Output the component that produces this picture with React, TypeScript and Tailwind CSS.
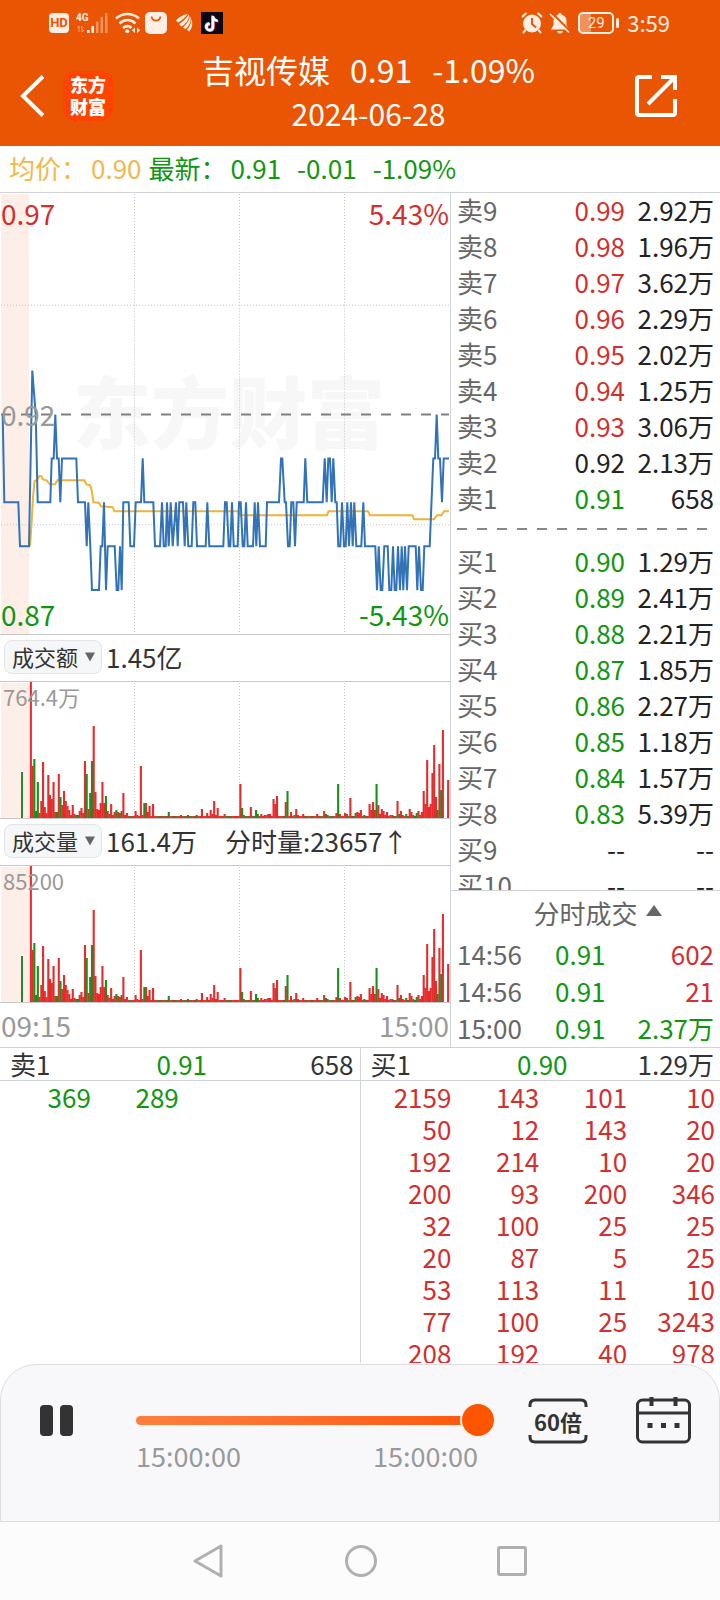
import { ReactNode } from 'react';

const GREEN = 'text-[#119611]';
const RED = 'text-[#d32f2f]';
const BLACK = 'text-[#222]';

type Row = [label: string, price: string, volume: string, color: string];

const sellRows: Row[] = [
  ['卖9', '0.99', '2.92万', RED],
  ['卖8', '0.98', '1.96万', RED],
  ['卖7', '0.97', '3.62万', RED],
  ['卖6', '0.96', '2.29万', RED],
  ['卖5', '0.95', '2.02万', RED],
  ['卖4', '0.94', '1.25万', RED],
  ['卖3', '0.93', '3.06万', RED],
  ['卖2', '0.92', '2.13万', BLACK],
  ['卖1', '0.91', '658', GREEN],
];

const buyRows: Row[] = [
  ['买1', '0.90', '1.29万', GREEN],
  ['买2', '0.89', '2.41万', GREEN],
  ['买3', '0.88', '2.21万', GREEN],
  ['买4', '0.87', '1.85万', GREEN],
  ['买5', '0.86', '2.27万', GREEN],
  ['买6', '0.85', '1.18万', GREEN],
  ['买7', '0.84', '1.57万', GREEN],
  ['买8', '0.83', '5.39万', GREEN],
  ['买9', '--', '--', BLACK],
  ['买10', '--', '--', BLACK],
];

const trades: Row[] = [
  ['14:56', '0.91', '602', RED],
  ['14:56', '0.91', '21', RED],
  ['15:00', '0.91', '2.37万', GREEN],
];

const buyQueue = [
  [2159, 143, 101, 10],
  [50, 12, 143, 20],
  [192, 214, 10, 20],
  [200, 93, 200, 346],
  [32, 100, 25, 25],
  [20, 87, 5, 25],
  [53, 113, 11, 10],
  [77, 100, 25, 3243],
  [208, 192, 40, 978],
];

// [x in thirds of a pixel, price in cents]
const prices = [
  [8, 92], [13, 90], [55, 90], [60, 89], [87, 89], [97, 93], [107, 92], [113, 90], [151, 90], [155, 91],
  [161, 91], [166, 92], [171, 91], [176, 91], [181, 90], [186, 91], [229, 91], [234, 90], [255, 90], [260, 89],
  [265, 90], [271, 89], [276, 88], [297, 88], [302, 89], [307, 89], [312, 90], [318, 88], [323, 89], [344, 89],
  [350, 88], [355, 88], [360, 89], [365, 88], [370, 90], [386, 90], [391, 89], [402, 89], [407, 90], [423, 90],
  [428, 91], [433, 90], [460, 90], [465, 89], [480, 89], [486, 90], [491, 89], [497, 89], [501, 90], [506, 89],
  [512, 90], [518, 89], [528, 90], [533, 89], [538, 90], [549, 90], [554, 89], [559, 90], [565, 89], [575, 89],
  [580, 90], [586, 90], [591, 89], [617, 89], [622, 90], [628, 89], [670, 89], [675, 90], [680, 90], [686, 89],
  [691, 89], [696, 90], [701, 89], [713, 89], [717, 90], [722, 90], [728, 89], [733, 89], [738, 90], [743, 89],
  [759, 89], [764, 90], [769, 89], [774, 90], [780, 89], [797, 89], [801, 90], [837, 90], [843, 91], [847, 91],
  [854, 90], [858, 90], [864, 89], [869, 89], [874, 90], [880, 90], [885, 89], [890, 90], [911, 90], [916, 91],
  [922, 90], [968, 90], [974, 91], [980, 90], [985, 91], [990, 91], [995, 90], [1000, 91], [1006, 90], [1010, 90],
  [1015, 89], [1021, 89], [1026, 90], [1032, 89], [1037, 89], [1042, 90], [1047, 89], [1053, 90], [1058, 89], [1063, 90],
  [1069, 89], [1084, 89], [1090, 90], [1095, 89], [1126, 89], [1131, 88], [1136, 89], [1142, 88], [1147, 88], [1153, 89],
  [1163, 89], [1168, 88], [1174, 88], [1179, 89], [1184, 88], [1189, 88], [1194, 89], [1200, 88], [1205, 89], [1210, 88],
  [1215, 89], [1221, 88], [1226, 89], [1247, 89], [1252, 88], [1257, 89], [1263, 88], [1268, 88], [1273, 89], [1289, 89],
  [1300, 91], [1305, 91], [1310, 92], [1315, 91], [1320, 91], [1326, 90], [1331, 91], [1347, 91],
];

const pricePoints = prices.map(([x, p]) => `${(x / 3).toFixed(1)},${222 + (92 - p) * 44}`).join(' ');

const averagePoints =
  '30,354 31.5,332 33,305 34.5,289 37.5,287 39.5,283.5 41.5,284 43,287 46.5,288 50,292 55,292 57.5,288 84.5,288 ' +
  '86.5,292 90,293 91.5,297 93.5,310 99,310.5 101,314 112.5,315 114.5,319 238,319 240,323 327,323 328.5,319 ' +
  '368,319 370,323 412.5,323 414,327 434,327 437,323 441.5,323 444,319 449,319';

// One bar a minute, negative where the price fell
const volumes = [
  136, 52, -59, -7, -36, 5, 17, 56, 11, 5, 43, 23, 19, 36, 6, -6, 44, -21, 13, 27,
  17, 12, 8, 3, 13, 4, -3, -3, 7, 10, 5, 57, -44, 9, -25, -57, 92, 26, 9, 8,
  15, 36, 15, -22, 7, 4, 14, 3, 6, -8, 6, 5, -7, 25, 3, 5, 2, -2, 2, 2,
  7, 3, 2, 52, 3, -15, 15, 6, 12, 2, 14, 2, 2, -2, 2, 2, -2, 2, 2, -6,
  2, 2, -2, 2, -2, 2, 3, 2, -2, 2, -3, 2, -2, 2, 2, -3, 2, 2, 9, 2,
  2, 5, 2, 8, 4, 17, 3, 10, 2, 2, 2, 4, -2, 2, -2, 2, 2, 2, 2, 2,
  34, -10, 3, -2, 2, -2, 11, 2, -2, -8, -4, 2, 4, 2, 3, 3, 4, 4, 2, 19,
  14, 22, 2, 2, 2, -2, 16, -27, 2, 6, 2, -3, 9, 3, 2, 2, 4, 2, -2, 2,
  2, -2, 2, 2, 4, 2, -2, 2, 7, -4, 3, -2, 2, -2, 2, 5, -34, 4, 2, 2,
  5, 4, -2, 20, 2, -2, -5, 6, 5, 8, 2, -3, 2, 2, 14, 8, 16, 8, -34, 13,
  4, 9, 7, 3, 6, 2, 3, 3, -2, 2, 17, -4, 7, 3, 2, -4, 2, 9, 6, 3,
  -2, -5, 7, 3, 6, 27, 14, 58, 11, 14, 45, 73, 21, -8, 54, -28, 88, 0, 0, 38,
];

function Grid({ height }: { height: number }) {
  return (
    <>
      <rect x="1" y="1" width="28" height={height - 1} fill="#fdeee8" />
      <path
        d={`M134.5 1V${height}M239.5 1V${height}M344.5 1V${height}`}
        stroke="#c4c4c4"
        strokeDasharray="1 2"
      />
    </>
  );
}

function VolumeChart({ label }: { label: string }) {
  return (
    <div className="relative border-y border-[#c8c8c8]">
      <svg viewBox="0 0 450 136" preserveAspectRatio="none" className="block h-[136px] w-full">
        <Grid height={136} />
        <rect x="21" y="90" width="2" height="46" fill="#2c862c" />
        {volumes.map((v, i) => (
          <rect
            key={i}
            x={29.8 + i * 1.746}
            y={136 - Math.abs(v)}
            width="2.1"
            height={Math.abs(v)}
            fill={v < 0 ? '#1a8f1a' : '#e52b2b'}
          />
        ))}
      </svg>
      <span className="absolute left-[3px] top-0 text-[22px] leading-7 text-[#999]">{label}</span>
    </div>
  );
}

function MetricSelect({ name, children }: { name: string; children: ReactNode }) {
  return (
    <div className="flex h-[46px] items-center pb-0.5 pl-1 text-[#333]">
      <div className="relative">
        <select
          aria-label={name}
          defaultValue={name}
          className="block h-[34px] w-[98px] appearance-none rounded-lg border border-[#e2e4e8] bg-[#f6f7f9] pb-0.5 pl-[7px] text-[22px] leading-[30px]"
        >
          <option>成交额</option>
          <option>成交量</option>
        </select>
        <svg viewBox="0 0 12 10" className="pointer-events-none absolute right-[6px] top-3 h-[10px] w-3">
          <path d="M1 0.500h10L6 9.500z" fill="#666" />
        </svg>
      </div>
      <div className="flex gap-7 pl-1">{children}</div>
    </div>
  );
}

function BookTable({ rows, caption }: { rows: Row[]; caption: string }) {
  return (
    <table className="w-full table-fixed whitespace-nowrap" aria-label={caption}>
      <tbody>
        {rows.map(([label, price, volume, color]) => (
          <tr key={label} className="h-9">
            <th scope="row" className="p-0 pb-0.5 pl-[6px] text-left font-normal text-[#666]">{label}</th>
            <td className={`w-[84px] p-0 pb-0.5 text-right ${color}`}>{price}</td>
            <td className="w-[95px] p-0 pb-0.5 pr-[6px] text-right text-[#222]">{volume}</td>
          </tr>
        ))}
      </tbody>
    </table>
  );
}

function StatusBar() {
  return (
    <div className="flex h-[46px] items-center justify-between pl-[49px] pr-[50px] text-[#ffeee4]">
      <div className="flex items-center">
        <span className="flex h-5 w-5 items-center justify-center rounded bg-[#ffeee4] font-['Roboto'] text-[13px] font-bold leading-5 text-[#ea5504]">
          HD
        </span>
        <svg viewBox="0 0 34 22" className="ml-[6px] h-[22px] w-[34px]" fill="currentColor">
          <text x="1" y="9" fontSize="10" fontWeight="700" fontFamily="Roboto">4G</text>
          <path d="M4 14v6M2.500 16l1.500-2M7 14v6l2-2" stroke="currentColor" fill="none" opacity="0.5" />
          <rect x="12" y="18" width="2.500" height="3" />
          <rect x="16.500" y="14" width="2.500" height="7" />
          <rect x="21" y="9.500" width="2.500" height="11.500" opacity="0.4" />
          <rect x="25.500" y="5" width="2.500" height="16" opacity="0.4" />
          <rect x="30" y="1" width="2.500" height="20" opacity="0.4" />
        </svg>
        <svg viewBox="0 0 26 22" className="ml-[6px] h-[22px] w-[26px]" fill="none" stroke="currentColor" strokeWidth="2.600">
          <path d="M1 6.500c7-6 16-6 23 0M4.500 11.500c5-4.500 11-4.500 16 0M8 16c3-2.500 6-2.500 8.500 0" />
          <circle cx="12.300" cy="19.300" r="2" fill="currentColor" stroke="none" />
          <path d="M20 15.500v5.500l-3-2.700zM22 15.500v5.500l3-2.700z" fill="currentColor" stroke="none" />
        </svg>
        <svg viewBox="0 0 22 22" className="ml-1 h-[22px] w-[22px]">
          <rect width="22" height="22" rx="5" fill="currentColor" />
          <path d="M6.500 4.500c1 5.500 8 5.500 9 0" fill="none" stroke="#ea5504" strokeWidth="1.600" />
        </svg>
        <svg viewBox="0 0 18 20" className="ml-[9px] h-5 w-[18px]" fill="currentColor">
          <path d="M0 7.500C3 4 7 1.500 12 1 9 4.500 5 8 2 9.500z" />
          <path d="M3 11C7 8.500 10.500 5 13 1.500 13.500 6 10 11 5.500 13.500z" />
          <path d="M7 14.500C11 11 13 7.500 14 3c2 4.500-1 10.500-4.500 13z" />
          <path d="M11 17C14 13.500 15.200 10 15.300 6c2 4 .7 9.500-2 12.500z" />
        </svg>
        <svg viewBox="0 0 22 22" className="ml-[7px] h-[22px] w-[22px]">
          <rect width="22" height="22" fill="#0b0814" />
          <g fill="none" strokeWidth="2.400">
            <path d="M11.300 3.500v11a3.300 3.300 0 1 1-3.300-3.300M11.300 4c.4 2.600 2 4 4.700 4.200" stroke="#43e3e8" />
            <path d="M12.700 4.500v11A3.300 3.300 0 1 1 9.400 12.200M12.700 5c.4 2.600 2 4 4.700 4.200" stroke="#f3405f" />
            <path d="M12 4v11a3.300 3.300 0 1 1-3.300-3.300M12 4.500c.4 2.600 2 4 4.700 4.200" stroke="#fff" />
          </g>
        </svg>
      </div>
      <div className="flex items-center">
        <svg viewBox="0 0 24 22" className="h-[22px] w-6">
          <circle cx="12" cy="11.500" r="9" fill="currentColor" />
          <path d="M2 5l4.500-4M22 5l-4.500-4M5.500 18L3 21M18.500 18l2.500 3" stroke="currentColor" strokeWidth="2" />
          <path d="M12 6v6l4 3.500" fill="none" stroke="#ea5504" strokeWidth="2" />
        </svg>
        <svg viewBox="0 0 22 22" className="ml-[5px] h-[22px] w-[22px]">
          <path d="M11 1c1.300 0 1.800.8 1.800 1.800C16 3.700 17.500 6 17.500 9v4l2.500 4.500H2L4.500 13V9c0-3 1.500-5.300 4.700-6.200C9.200 1.800 9.700 1 11 1zM8 19h6c-.5 1.700-1.500 2.500-3 2.500S8.500 20.700 8 19z" fill="currentColor" />
          <path d="M2.500 0.500l19 19" stroke="#ea5504" strokeWidth="2" />
          <path d="M1 2l19 18.500" stroke="currentColor" strokeWidth="1.600" />
        </svg>
        <span className="ml-[7px] flex h-[22px] w-[36px] items-center justify-center rounded-[5px] border-2 border-current bg-linear-to-r from-white/35 from-35% to-transparent to-35% font-['Roboto'] text-[15px] leading-4">
          29
        </span>
        <span className="ml-[2px] h-[10px] w-[3px] rounded bg-current" />
        <span className="ml-2 pb-0.5 text-[22px] leading-6">3:59</span>
      </div>
    </div>
  );
}

function Header() {
  return (
    <header className="bg-[#ea5504] text-white">
      <StatusBar />
      <div className="flex h-[100px] items-center pl-5 pr-[42px]">
        <button aria-label="返回">
          <svg viewBox="0 0 24 42" className="block h-[42px] w-6" fill="none" stroke="currentColor" strokeWidth="4">
            <path d="M23 1.500L3 21l20 19.500" />
          </svg>
        </button>
        <a
          href="#home"
          className="ml-[19px] flex h-[50px] w-[50px] flex-col items-center justify-center rounded-xl bg-[#ff4400] pb-0.5 text-[18px] font-black leading-[22px]"
        >
          <span>东方</span>
          <span>财富</span>
        </a>
        <div className="flex-1 pb-[10px] pr-[10px] text-center leading-[44px]">
          <h1 className="flex justify-center gap-5 text-[32px]">
            <span>吉视传媒</span>
            <span>0.91</span>
            <span>-1.09%</span>
          </h1>
          <p className="text-[30px]">2024-06-28</p>
        </div>
        <button aria-label="分享">
          <svg viewBox="0 0 44 44" className="block h-11 w-11" fill="none" stroke="currentColor" strokeWidth="4">
            <path d="M18 3H5Q3 3 3 5V39Q3 41 5 41H39Q41 41 41 39V25M27 3H41V16M14 30L41 3" />
          </svg>
        </button>
      </div>
    </header>
  );
}

function PriceChart() {
  return (
    <div className="relative border-b border-[#c8c8c8] text-[28px] leading-9">
      <span className="absolute left-[73px] top-[170px] whitespace-nowrap text-[78px] font-black leading-[92px] text-[#f7f7f7]">
        东方财富
      </span>
      <svg viewBox="0 0 450 442" preserveAspectRatio="none" className="relative block h-[441px] w-full" fill="none">
        <Grid height={442} />
        <path d="M1 112.500H449M1 332.500H449" stroke="#c4c4c4" strokeDasharray="1 2" />
        <path d="M1 222H449" stroke="#808080" strokeWidth="2" strokeDasharray="10 10" />
        <polyline points={averagePoints} stroke="#efb336" strokeWidth="2" />
        <polyline points={pricePoints} stroke="#3273b8" strokeWidth="2" />
      </svg>
      <span className={`absolute left-px top-0.5 ${RED}`}>0.97</span>
      <span className={`absolute right-px top-0.5 ${RED}`}>5.43%</span>
      <span className="absolute left-px top-[203px] text-[#999]">0.92</span>
      <span className={`absolute bottom-0.5 left-px ${GREEN}`}>0.87</span>
      <span className={`absolute bottom-0.5 right-px ${GREEN}`}>-5.43%</span>
    </div>
  );
}

function OrderBook() {
  return (
    <section className="w-[37.5%] border-l border-[#d0d3d8]">
      <div className="h-[697px] overflow-hidden">
        <BookTable rows={sellRows} caption="卖盘" />
        <svg className="block h-[27px] w-full">
          <line x1="6" y1="12" x2="258" y2="12" stroke="#888" strokeWidth="2" strokeDasharray="10 10" />
        </svg>
        <BookTable rows={buyRows} caption="买盘" />
      </div>
      <div className="border-t border-[#d0d3d8]">
        <button className="flex h-[45px] w-full items-center justify-center gap-2 pb-0.5 pl-6 text-[#666]">
          分时成交
          <svg viewBox="0 0 16 11" className="mb-1 h-[11px] w-4">
            <path d="M8 0l8 11H0z" fill="#666" />
          </svg>
        </button>
        <table className="w-full table-fixed whitespace-nowrap" aria-label="分时成交">
          <tbody>
            {trades.map(([time, price, volume, color], i) => (
              <tr key={i} className="h-[37px]">
                <td className="w-[104px] p-0 pb-0.5 pl-[6px] text-[#666]">{time}</td>
                <td className={`w-[60px] p-0 pb-0.5 ${GREEN}`}>{price}</td>
                <td className={`p-0 pb-0.5 pr-[6px] text-right ${color}`}>{volume}</td>
              </tr>
            ))}
          </tbody>
        </table>
      </div>
    </section>
  );
}

interface QueueProps {
  label: string;
  price: string;
  volume: string;
  rows: number[][];
  color: string;
}

function Queue({ label, price, volume, rows, color }: QueueProps) {
  return (
    <div className="flex-1 border-l border-[#d0d3d8] first:border-l-0">
      <div className="grid h-[33px] grid-cols-3 items-center border-b border-[#d0d3d8] pl-[10px] pr-[6px] text-[#333]">
        <span>{label}</span>
        <span className={`text-center ${GREEN}`}>{price}</span>
        <span className="text-right">{volume}</span>
      </div>
      <div className="pl-2">
        <table className={`w-full table-fixed text-right ${color}`} aria-label={label}>
          <tbody>
            {rows.map((row, i) => (
              <tr key={i} className="h-8">
                {row.map((n, j) => (
                  <td key={j} className="p-0 pr-[5px]">{n || ''}</td>
                ))}
              </tr>
            ))}
          </tbody>
        </table>
      </div>
    </div>
  );
}

function Player() {
  return (
    <section className="h-[158px] rounded-t-[36px] border border-[#dcdde0] bg-[#f8f8fa] pl-[39px] pr-7 pt-[31px]">
      <div className="flex items-start">
        <button aria-label="暂停" className="mt-[9px] flex gap-[7px]">
          <span className="h-[31px] w-[13px] rounded bg-[#333]" />
          <span className="h-[31px] w-[13px] rounded bg-[#333]" />
        </button>
        <div className="ml-[63px] flex-1">
          <input
            type="range"
            aria-label="播放进度"
            min={0}
            max={100}
            defaultValue={100}
            className="mt-[6px] block h-9 w-full appearance-none bg-transparent [&::-webkit-slider-runnable-track]:h-[9px] [&::-webkit-slider-runnable-track]:rounded-full [&::-webkit-slider-runnable-track]:bg-linear-to-r [&::-webkit-slider-runnable-track]:from-[#ff7f3f] [&::-webkit-slider-runnable-track]:to-[#ff5500] [&::-webkit-slider-thumb]:-mt-[14px] [&::-webkit-slider-thumb]:h-9 [&::-webkit-slider-thumb]:w-9 [&::-webkit-slider-thumb]:appearance-none [&::-webkit-slider-thumb]:rounded-full [&::-webkit-slider-thumb]:border-2 [&::-webkit-slider-thumb]:border-[#fff6ee] [&::-webkit-slider-thumb]:bg-[#ff5500]"
          />
          <div className="mt-0.5 flex justify-between pr-[18px] text-[27px] leading-8 text-[#999]">
            <span>15:00:00</span>
            <span>15:00:00</span>
          </div>
        </div>
        <button className="relative ml-8 mt-[2px] h-[46px] w-[60px] text-[22px] font-bold leading-[44px] text-[#333]">
          <svg viewBox="0 0 60 46" className="absolute inset-0 h-full w-full" fill="none" stroke="#333" strokeWidth="3">
            <path d="M2 9V7Q2 2 7 2H53Q58 2 58 7V9M2 37V39Q2 44 7 44H53Q58 44 58 39V37" />
          </svg>
          60倍
        </button>
        <button aria-label="选择日期" className="ml-12">
          <svg viewBox="0 0 55 48" className="block h-12 w-[55px]" fill="none" stroke="#333" strokeWidth="3">
            <rect x="1.500" y="4" width="52" height="42" rx="5" />
            <path d="M2 17H53" />
            <path d="M15.500 1v9M39.500 1v9" strokeWidth="4" />
            <path d="M11.500 29.500h5M25 29.500h5M38.500 29.500h5" strokeWidth="5" />
          </svg>
        </button>
      </div>
    </section>
  );
}

function SystemNav() {
  return (
    <nav className="flex h-[78px] items-center justify-center gap-[120px] bg-[#fcfcfc]">
      <button aria-label="后退">
        <svg viewBox="0 0 32 34" className="block h-[34px] w-8" fill="none" stroke="#b0b0b0" strokeWidth="3" strokeLinejoin="round">
          <path d="M28 2v30L2 17z" />
        </svg>
      </button>
      <button aria-label="主屏幕" className="h-8 w-8 rounded-full border-3 border-[#b0b0b0]" />
      <button aria-label="最近任务" className="h-[30px] w-[30px] rounded-[3px] border-3 border-[#b0b0b0]" />
    </nav>
  );
}

export default function App() {
  return (
    <div className="flex min-h-screen flex-col bg-white font-['Noto_Sans_CJK_SC',sans-serif] text-[26px] leading-8">
      <Header />
      <div className="flex h-[47px] items-center border-b border-[#d0d3d8] pb-[3px] pl-[9px]">
        <span className="flex gap-1 text-[#efb94c]">
          <span>均价：</span>
          <span>0.90</span>
        </span>
        <span className={`ml-[7px] flex gap-1 ${GREEN}`}>
          <span>最新：</span>
          <span>0.91</span>
        </span>
        <span className={`ml-4 flex gap-4 ${GREEN}`}>
          <span>-0.01</span>
          <span>-1.09%</span>
        </span>
      </div>

      <main className="flex flex-1 flex-col">
        <div className="flex border-b border-[#d0d3d8]">
          <section className="w-[62.5%]">
            <PriceChart />
            <MetricSelect name="成交额">
              <span>1.45亿</span>
            </MetricSelect>
            <VolumeChart label="764.4万" />
            <MetricSelect name="成交量">
              <span>161.4万</span>
              <span>分时量:23657↑</span>
            </MetricSelect>
            <VolumeChart label="85200" />
            <div className="flex h-11 items-center justify-between px-px text-[28px] text-[#999]">
              <span>09:15</span>
              <span>15:00</span>
            </div>
          </section>
          <OrderBook />
        </div>
        <div className="flex h-[315px] overflow-hidden">
          <Queue label="卖1" price="0.91" volume="658" rows={[[369, 289, 0, 0]]} color={GREEN} />
          <Queue label="买1" price="0.90" volume="1.29万" rows={buyQueue} color={RED} />
        </div>
      </main>

      <Player />
      <SystemNav />
    </div>
  );
}
